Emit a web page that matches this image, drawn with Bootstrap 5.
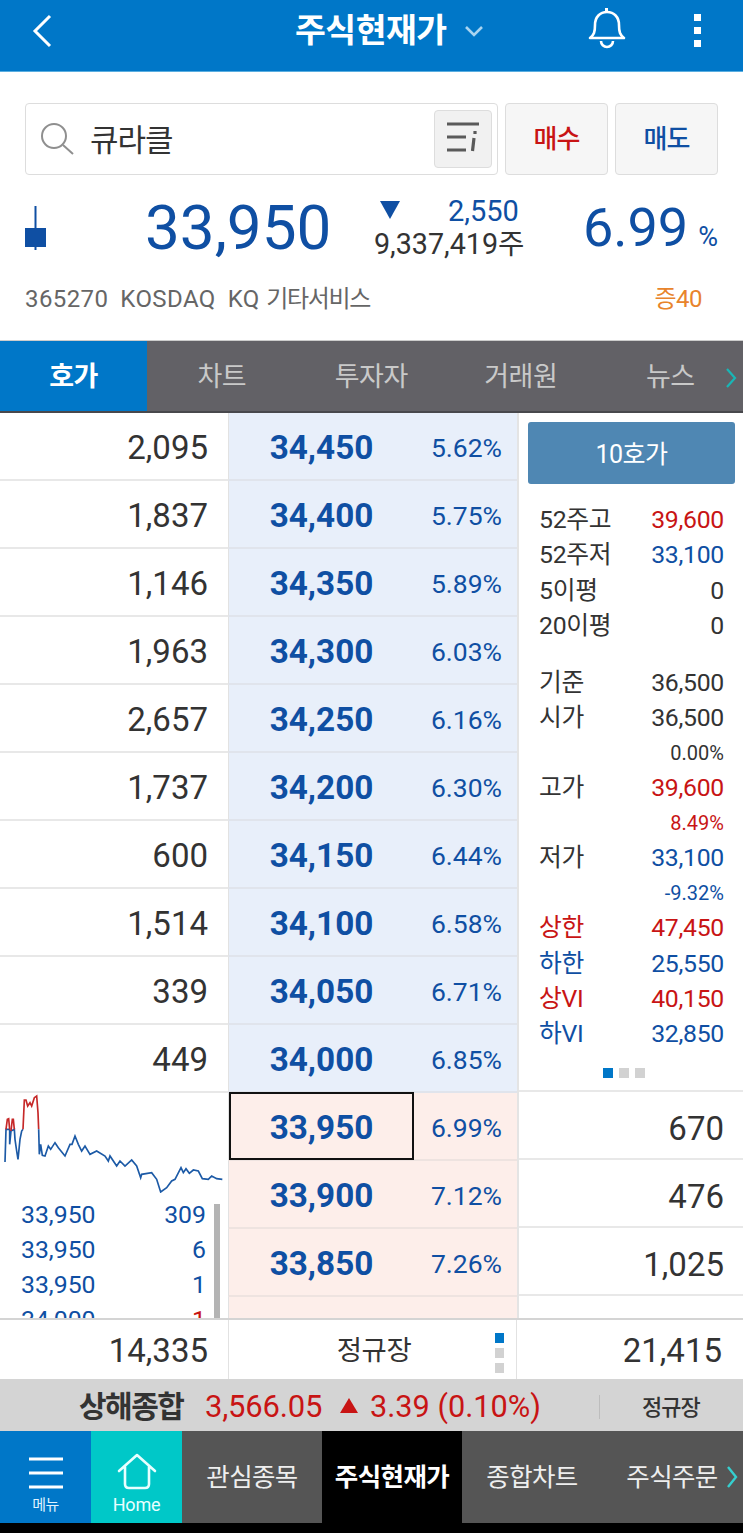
<!DOCTYPE html>
<html lang="ko">
  <head>
    <meta charset="UTF-8" />
    <meta name="viewport" content="width=device-width, initial-scale=1.0" />
    <title>주식현재가</title>
    <link href="https://cdn.jsdelivr.net/npm/bootstrap@5.3.0/dist/css/bootstrap.min.css" rel="stylesheet" />
    <style>
      html, body { margin: 0; background: #000; }
      body { font-family: Roboto, "Noto Sans CJK KR", sans-serif; color: #333; width: 743px; height: 1533px; overflow: hidden; }
      .c-up { color: #c81414; }
      .c-down { color: #0f4fa3; }

      .app-bar { height: 72px; background: #0077c8; border-bottom: 1px solid #5aaee0; color: #fff; position: relative; }
      .app-title { font-size: 33.5px; font-weight: 700; letter-spacing: -.5px; line-height: 1; }
      .app-back { margin-left: 31px; }
      .app-title-wrap { position: absolute; left: 295px; top: 14px; gap: 17px; }
      .app-bell { position: absolute; left: 587px; top: 6px; }
      .app-dots { position: absolute; left: 693px; top: 14px; }

      .summary { height: 268px; background: #fff; padding: 31px 25px 0; }
      .search-row { height: 72px; gap: 7px; }
      .search-box { width: 473px; border: 1px solid #ddd; border-radius: 4px; padding: 0 5px 0 15px; }
      .search-name { font-size: 31px; margin-left: 15px; letter-spacing: -1px; color: #333; flex: 1; line-height: 1; padding-top: 2px; }
      .filter-btn { width: 58px; height: 58px; background: #f1f1f1; border: 1px solid #ddd; border-radius: 4px; }
      .trade-btn { width: 103px; height: 72px; background: #f6f6f6; border: 1px solid #ddd; border-radius: 4px; font-size: 26px; font-weight: 500; letter-spacing: -1px; }
      .price-row { height: 90px; margin-top: 8px; }
      .candle { width: 21px; }
      .price-main { width: 285.5px; font-size: 62px; text-align: right; color: #0f4fa3; line-height: 1; }
      .price-mid { width: 150px; margin-left: 42.5px; position: relative; text-align: right; line-height: 33px; }
      .price-diff { font-size: 29px; margin-right: 5px; }
      .price-vol { font-size: 28.7px; color: #333; white-space: nowrap; }
      .price-tri { position: absolute; left: 6px; top: 6px; }
      .price-pct { margin-left: 59px; font-size: 54px; color: #0f4fa3; line-height: 1; }
      .price-unit { font-size: 27px; margin-left: 10px; }
      .code-row { font-size: 24px; color: #666; margin-top: 8px; padding-right: 16px; }
      .code-row .code-text { letter-spacing: .4px; }
      .code-row .code-text + .code-text { margin-left: 12px; }
      .code-row .code-sector { letter-spacing: -1.3px; }
      .code-vol { color: #e8842c; font-size: 24px; letter-spacing: -.5px; }

      .tab-bar { height: 73px; background: #626166; border-top: 1px solid #ccc; border-bottom: 2px solid #48484c; color: #c9c9c9; font-size: 27px; letter-spacing: -.5px; padding-top: 3px; }
      .tab-on { width: 147px; flex: none; background: #0077c8; color: #fff; font-weight: 700; margin-top: -3px; padding-top: 3px; }
      .tab-off { width: 149.5px; flex: none; }
      .tab-more { position: absolute; right: 6px; }

      .board { height: 905px; background: #fff; overflow: hidden; }
      .col-left { width: 228px; flex: none; }
      .col-mid { width: 289px; flex: none; }
      .col-right { width: 226px; flex: none; border-left: 2px solid #e4e4e4; }
      .qty-cell { height: 68px; border-bottom: 2px solid #e8e8e8; font-size: 33px; text-align: right; padding-right: 20px; line-height: 69px; }
      .ask-cell, .bid-cell { height: 68px; border-bottom: 2px solid #e0e4ec; padding-right: 15px; border-left: 1px solid #e2e2e2; }
      .ask-cell { background: #e8effa; }
      .bid-cell { background: #fdeeea; border-bottom-color: #eee3e0; }
      .cell-price { width: 185px; text-align: center; font-size: 33.3px; font-weight: 700; color: #0f4fa3; height: 68px; line-height: 71px; flex: none; }
      .cell-pct { flex: 1; text-align: right; font-size: 26.5px; color: #0f4fa3; padding-top: 3px; }
      .cell-now { border: 2px solid #111; height: 68px; line-height: 68px; }
      .bid-qty { height: 68px; border-bottom: 2px solid #e8e8e8; font-size: 33px; text-align: right; padding-right: 19px; line-height: 73px; }

      .side-panel { height: 679px; border-bottom: 2px solid #e8e8e8; padding: 9px 8px 0 9px; }
      .hoga-btn { display: block; width: 100%; height: 62px; background: #4f87b3; color: #fff; border: 0; border-radius: 3px; font-size: 25px; letter-spacing: -.5px; padding-top: 4px; }
      .side-list { font-size: 24.8px; padding: 10px 1px 0 11px; margin-top: 8px; }
      .side-list .side-row, .side-list .side-sub { margin-right: 10px; }
      .side-row { height: 35.3px; line-height: 35px; letter-spacing: -.3px; }
      .side-sub { font-size: 20px; text-align: right; height: 34.7px; line-height: 34px; }
      .side-gap { height: 22px; }
      .page-dots { gap: 6px; margin-top: 16px; padding-right: 25px; }
      .page-dots i { width: 10px; height: 10px; background: #d2d2d2; display: block; }
      .page-dots i.on { background: #0077c8; }

      .tick-panel { position: relative; height: 225px; overflow: hidden; }
      .tick-list { position: absolute; top: 105px; left: 21px; width: 185px; font-size: 24.8px; }
      .tick-row { height: 35px; line-height: 33px; }
      .tick-bar { position: absolute; left: 214px; top: 111px; width: 6px; height: 120px; background: #b4b4b4; }

      .total-row { height: 63px; background: #fff; border-top: 2px solid #d4d4d4; border-bottom: 2px solid #d4d4d4; font-size: 33px; padding-top: 3px; }
      .total-left { width: 228px; text-align: right; padding-right: 20px; }
      .total-mid { width: 289px; border-left: 1px solid #e2e2e2; border-right: 1px solid #e2e2e2; position: relative; text-align: center; font-size: 27.5px; letter-spacing: -.5px; margin-top: -3px; padding-top: 3px; padding-left: 3px; }
      .total-dots { position: absolute; left: 266px; top: 13px; gap: 5px; }
      .total-dots i { width: 9px; height: 10px; background: #d2d2d2; display: block; }
      .total-dots i.on { background: #0077c8; }
      .total-right { width: 226px; text-align: right; padding-right: 21px; }

      .ticker { height: 50px; background: #d4d4d4; position: relative; font-size: 30px; line-height: 52px; }
      .ticker-name { position: absolute; left: 79px; font-weight: 700; color: #333; letter-spacing: -1.5px; }
      .ticker-val { position: absolute; left: 205px; color: #c81414; font-size: 31px; letter-spacing: -.2px; }
      .ticker-tri { position: absolute; left: 340px; top: 17px; }
      .ticker-diff { position: absolute; left: 370px; color: #c81414; font-size: 30.7px; }
      .ticker-sep { position: absolute; left: 599px; top: 14px; width: 1px; height: 24px; background: #bdbdbd; }
      .ticker-state { position: absolute; left: 642px; font-size: 22px; font-weight: 500; color: #333; letter-spacing: -1px; top: 1px; }

      .bottom-nav { height: 92px; background: #555; color: #eee; font-size: 25.5px; letter-spacing: -.6px; position: relative; }
      .nav-menu { width: 91px; background: #0077c8; color: #dff2ff; font-size: 15px; padding-top: 26px; line-height: 1; gap: 8px; }
      .nav-home { width: 91px; background: #00c8c8; color: #e8ffff; font-size: 18px; letter-spacing: -.2px; padding-top: 22px; line-height: 1; gap: 6px; }
      .nav-item { width: 140px; }
      .nav-on { background: #000; color: #fff; font-weight: 700; }
      .nav-more { position: absolute; right: 5px; top: 34px; }
      .nav-tail { height: 10px; background: #000; }
    </style>
  </head>
  <body>
    <!-- top bar -->
    <div class="app-bar">
      <svg class="app-back" width="22" height="62" viewBox="0 0 22 62"><path d="M19 16 L4 31 L19 46" fill="none" stroke="#fff" stroke-width="3" /></svg>
      <div class="app-title-wrap d-flex align-items-center">
        <span class="app-title">주식현재가</span>
        <svg width="20" height="12" viewBox="0 0 20 12"><path d="M2 2 L10 10 L18 2" fill="none" stroke="#a9d4f0" stroke-width="2.6" /></svg>
      </div>
      <svg class="app-bell" width="40" height="44" viewBox="0 0 40 44">
        <path d="M19 2 v4 M20 2 v4" stroke="#fff" stroke-width="2" />
        <path d="M3 32 c4 -3 5 -6 5 -13 c0 -8 5 -13 12 -13 c7 0 12 5 12 13 c0 7 1 10 5 13 z" fill="none" stroke="#fff" stroke-width="2.6" stroke-linejoin="round" />
        <path d="M14 35 a6 6 0 0 0 12 0" fill="none" stroke="#fff" stroke-width="2.6" />
      </svg>
      <svg class="app-dots" width="10" height="34" viewBox="0 0 10 34"><rect x="1" y="0" width="7" height="7" fill="#fff" /><rect x="1" y="13" width="7" height="7" fill="#fff" /><rect x="1" y="26" width="7" height="7" fill="#fff" /></svg>
    </div>

    <!-- stock summary -->
    <div class="summary">
      <div class="search-row d-flex">
        <div class="search-box d-flex align-items-center">
          <svg width="34" height="34" viewBox="0 0 34 34"><circle cx="13" cy="14" r="12" fill="none" stroke="#8f8f8f" stroke-width="2" /><path d="M22 23 L32 32" stroke="#8f8f8f" stroke-width="2" /></svg>
          <span class="search-name">큐라클</span>
          <div class="filter-btn d-flex align-items-center justify-content-center">
            <svg width="36" height="36" viewBox="0 0 36 36">
              <path d="M2 3 H34 M2 16 H21 M2 29 H21" stroke="#5a5a5a" stroke-width="2.8" />
              <path d="M27.5 30 L29 17 M30 13 L30 10" stroke="#5a5a5a" stroke-width="3.2" fill="none" />
            </svg>
          </div>
        </div>
        <div class="trade-btn c-up d-flex align-items-center justify-content-center">매수</div>
        <div class="trade-btn c-down d-flex align-items-center justify-content-center">매도</div>
      </div>

      <div class="price-row d-flex align-items-center">
        <svg class="candle" width="21" height="44" viewBox="0 0 21 44"><path d="M10.5 0 V44" stroke="#0f4fa3" stroke-width="2" /><rect x="0" y="22" width="21" height="19" fill="#0f4fa3" /></svg>
        <div class="price-main">33,950</div>
        <div class="price-mid">
          <svg class="price-tri" width="20" height="18" viewBox="0 0 20 18"><path d="M0 0 H20 L10 18 z" fill="#0f4fa3" /></svg>
          <div class="price-diff c-down">2,550</div>
          <div class="price-vol">9,337,419주</div>
        </div>
        <div class="price-pct d-flex align-items-baseline">6.99<span class="price-unit">%</span></div>
      </div>

      <div class="code-row d-flex justify-content-between">
        <div><span class="code-text">365270</span><span class="code-text">KOSDAQ</span><span class="code-text">KQ <span class="code-sector">기타서비스</span></span></div>
        <div class="code-vol">증40</div>
      </div>
    </div>

    <!-- tabs -->
    <div class="tab-bar d-flex position-relative align-items-stretch">
      <div class="tab-on d-flex align-items-center justify-content-center">호가</div>
      <div class="tab-off d-flex align-items-center justify-content-center">차트</div>
      <div class="tab-off d-flex align-items-center justify-content-center">투자자</div>
      <div class="tab-off d-flex align-items-center justify-content-center">거래원</div>
      <div class="tab-off d-flex align-items-center justify-content-center">뉴스</div>
      <svg class="tab-more align-self-center" width="12" height="22" viewBox="0 0 12 22"><path d="M2 2 L10 11 L2 20" fill="none" stroke="#19b6b6" stroke-width="2.2" /></svg>
    </div>

    <!-- order book -->
    <div class="board d-flex">
      <div class="col-left">
        <div class="qty-cell">2,095</div>
        <div class="qty-cell">1,837</div>
        <div class="qty-cell">1,146</div>
        <div class="qty-cell">1,963</div>
        <div class="qty-cell">2,657</div>
        <div class="qty-cell">1,737</div>
        <div class="qty-cell">600</div>
        <div class="qty-cell">1,514</div>
        <div class="qty-cell">339</div>
        <div class="qty-cell">449</div>
        <div class="tick-panel">
          <svg width="228" height="100" viewBox="0 21 684 300" class="d-block">
            <polyline fill="none" stroke="#1c5aa6" stroke-width="5" points="15,228 18,130 29,130 29,175 33,135 43,130 45,160 50,195 54,220 60,160 65,135 69,130" />
            <polyline fill="none" stroke="#c62828" stroke-width="5" points="18,130 22,100 26,98 29,130" />
            <polyline fill="none" stroke="#c62828" stroke-width="5" points="33,135 37,100 40,100 43,130" />
            <polyline fill="none" stroke="#c62828" stroke-width="5" points="69,130 73,42 78,42 83,60 90,50 95,60 103,35 110,30 114,80 116,130" />
            <polyline fill="none" stroke="#1c5aa6" stroke-width="5" points="116,130 118,205 122,175 127,208 135,210 145,180 152,190 165,170 175,185 195,210 210,175 216,175 225,150 235,175 245,195 255,180 270,205 290,195 315,210 325,225 330,210 350,240 360,225 375,240 395,222 410,240 422,275 425,265 455,260 470,280 482,318 500,305 515,285 525,280 543,245 550,260 558,248 568,262 580,252 595,255 607,278 625,280 635,270 650,278 667,280" />
          </svg>
          <div class="tick-list">
            <div class="tick-row c-down d-flex justify-content-between"><span>33,950</span><span>309</span></div>
            <div class="tick-row c-down d-flex justify-content-between"><span>33,950</span><span>6</span></div>
            <div class="tick-row c-down d-flex justify-content-between"><span>33,950</span><span>1</span></div>
            <div class="tick-row d-flex justify-content-between"><span class="c-down">34,000</span><span class="c-up">1</span></div>
          </div>
          <div class="tick-bar"></div>
        </div>
      </div>

      <div class="col-mid">
        <div class="ask-cell d-flex align-items-center"><div class="cell-price">34,450</div><div class="cell-pct">5.62%</div></div>
        <div class="ask-cell d-flex align-items-center"><div class="cell-price">34,400</div><div class="cell-pct">5.75%</div></div>
        <div class="ask-cell d-flex align-items-center"><div class="cell-price">34,350</div><div class="cell-pct">5.89%</div></div>
        <div class="ask-cell d-flex align-items-center"><div class="cell-price">34,300</div><div class="cell-pct">6.03%</div></div>
        <div class="ask-cell d-flex align-items-center"><div class="cell-price">34,250</div><div class="cell-pct">6.16%</div></div>
        <div class="ask-cell d-flex align-items-center"><div class="cell-price">34,200</div><div class="cell-pct">6.30%</div></div>
        <div class="ask-cell d-flex align-items-center"><div class="cell-price">34,150</div><div class="cell-pct">6.44%</div></div>
        <div class="ask-cell d-flex align-items-center"><div class="cell-price">34,100</div><div class="cell-pct">6.58%</div></div>
        <div class="ask-cell d-flex align-items-center"><div class="cell-price">34,050</div><div class="cell-pct">6.71%</div></div>
        <div class="ask-cell d-flex align-items-center"><div class="cell-price">34,000</div><div class="cell-pct">6.85%</div></div>
        <div class="bid-cell d-flex align-items-center"><div class="cell-price cell-now">33,950</div><div class="cell-pct">6.99%</div></div>
        <div class="bid-cell d-flex align-items-center"><div class="cell-price">33,900</div><div class="cell-pct">7.12%</div></div>
        <div class="bid-cell d-flex align-items-center"><div class="cell-price">33,850</div><div class="cell-pct">7.26%</div></div>
        <div class="bid-cell"></div>
      </div>

      <div class="col-right">
        <div class="side-panel">
          <button type="button" class="hoga-btn">10호가</button>
          <div class="side-list">
            <div class="side-row d-flex justify-content-between"><span>52주고</span><span class="c-up">39,600</span></div>
            <div class="side-row d-flex justify-content-between"><span>52주저</span><span class="c-down">33,100</span></div>
            <div class="side-row d-flex justify-content-between"><span>5이평</span><span>0</span></div>
            <div class="side-row d-flex justify-content-between"><span>20이평</span><span>0</span></div>
            <div class="side-gap"></div>
            <div class="side-row d-flex justify-content-between"><span>기준</span><span>36,500</span></div>
            <div class="side-row d-flex justify-content-between"><span>시가</span><span>36,500</span></div>
            <div class="side-sub">0.00%</div>
            <div class="side-row d-flex justify-content-between"><span>고가</span><span class="c-up">39,600</span></div>
            <div class="side-sub c-up">8.49%</div>
            <div class="side-row d-flex justify-content-between"><span>저가</span><span class="c-down">33,100</span></div>
            <div class="side-sub c-down">-9.32%</div>
            <div class="side-row d-flex justify-content-between c-up"><span>상한</span><span>47,450</span></div>
            <div class="side-row d-flex justify-content-between c-down"><span>하한</span><span>25,550</span></div>
            <div class="side-row d-flex justify-content-between c-up"><span>상VI</span><span>40,150</span></div>
            <div class="side-row d-flex justify-content-between c-down"><span>하VI</span><span>32,850</span></div>
            <div class="page-dots d-flex justify-content-center"><i class="on"></i><i></i><i></i></div>
          </div>
        </div>
        <div class="bid-qty">670</div>
        <div class="bid-qty">476</div>
        <div class="bid-qty">1,025</div>
        <div class="bid-qty"></div>
      </div>
    </div>

    <!-- totals -->
    <div class="total-row d-flex align-items-center">
      <div class="total-left">14,335</div>
      <div class="total-mid align-self-stretch d-flex align-items-center justify-content-center">
        정규장
        <div class="total-dots d-flex flex-column"><i class="on"></i><i></i><i></i></div>
      </div>
      <div class="total-right">21,415</div>
    </div>

    <!-- index ticker -->
    <div class="ticker">
      <span class="ticker-name">상해종합</span>
      <span class="ticker-val">3,566.05</span>
      <svg class="ticker-tri" width="18" height="15" viewBox="0 0 18 15"><path d="M9 0 L18 15 H0 z" fill="#c81414" /></svg>
      <span class="ticker-diff">3.39 (0.10%)</span>
      <span class="ticker-sep"></span>
      <span class="ticker-state">정규장</span>
    </div>

    <!-- bottom menu -->
    <div class="bottom-nav d-flex align-items-stretch">
      <div class="nav-menu d-flex flex-column align-items-center">
        <svg width="36" height="33" viewBox="0 0 36 33"><path d="M1 2 H35 M1 16 H35 M1 30 H35" stroke="#fff" stroke-width="3" /></svg>
        <span>메뉴</span>
      </div>
      <div class="nav-home d-flex flex-column align-items-center">
        <svg width="40" height="37" viewBox="0 0 40 37"><path d="M2 18 L20 2 L38 18 M8 14 V31 Q8 35 12 35 H28 Q32 35 32 31 V14" fill="none" stroke="#e8ffff" stroke-width="2.6" stroke-linecap="round" stroke-linejoin="round" /></svg>
        <span>Home</span>
      </div>
      <div class="nav-item d-flex align-items-center justify-content-center">관심종목</div>
      <div class="nav-item nav-on d-flex align-items-center justify-content-center">주식현재가</div>
      <div class="nav-item d-flex align-items-center justify-content-center">종합차트</div>
      <div class="nav-item d-flex align-items-center justify-content-center">주식주문</div>
      <svg class="nav-more" width="12" height="24" viewBox="0 0 12 24"><path d="M2 2 L10 12 L2 22" fill="none" stroke="#35cfcf" stroke-width="2.4" /></svg>
    </div>
    <div class="nav-tail"></div>

    <script src="https://cdn.jsdelivr.net/npm/bootstrap@5.3.0/dist/js/bootstrap.bundle.min.js"></script>
  </body>
</html>
